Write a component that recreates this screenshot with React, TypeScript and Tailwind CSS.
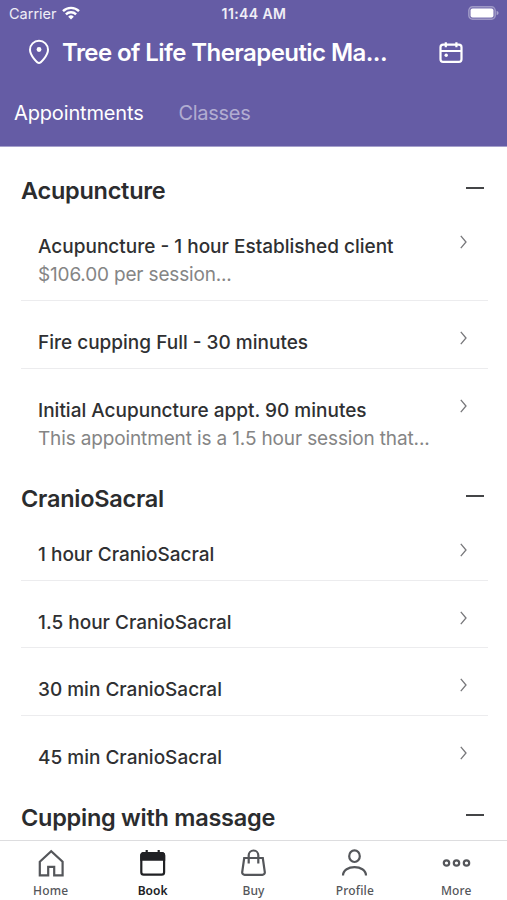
type Item = { title: string; sub?: string; subTracking?: string };
type SectionData = { name: string; items: Item[] };

const sections: SectionData[] = [
  {
    name: 'Acupuncture',
    items: [
      { title: 'Acupuncture - 1 hour Established client', sub: '$106.00 per session...', subTracking: 'tracking-[-0.17px]' },
      { title: 'Fire cupping Full - 30 minutes' },
      {
        title: 'Initial Acupuncture appt. 90 minutes',
        sub: 'This appointment is a 1.5 hour session that...',
        subTracking: 'tracking-[-0.14px]',
      },
    ],
  },
  {
    name: 'CranioSacral',
    items: [
      { title: '1 hour CranioSacral' },
      { title: '1.5 hour CranioSacral' },
      { title: '30 min CranioSacral' },
      { title: '45 min CranioSacral' },
    ],
  },
  { name: 'Cupping with massage', items: [] },
];

function Row({ item, last }: { item: Item; last: boolean }) {
  const height = item.sub ? (last ? 'h-[86px]' : 'h-24') : last ? 'h-[58.2px]' : 'h-[67.6px]';
  return (
    <li className={`flex items-start justify-between border-[#ececee] pr-[21px] pl-[17px] pt-7 ${height} ${last ? '' : 'border-b'}`}>
      <div className="whitespace-nowrap">
        <div className="text-[19px] leading-[27px] font-medium text-[#2f3032]">{item.title}</div>
        {item.sub && <div className={`text-[19px] leading-[30px] text-[#858585] ${item.subTracking}`}>{item.sub}</div>}
      </div>
      <svg className="mt-0.5 mr-[0.5px] h-[14px] w-[7px] shrink-0" viewBox="0 0 7 14" fill="none" stroke="#77777a" strokeWidth="1.3">
        <path d="M.8 .8 6 7 .8 13.2" />
      </svg>
    </li>
  );
}

function Section({ data }: { data: SectionData }) {
  return (
    <section>
      <header className="flex h-[58.3px] items-start justify-between pt-[28.8px]">
        <h2 className="text-[23.5px] leading-[30px] font-semibold tracking-[-0.26px] whitespace-nowrap text-[#2b2c2e]">{data.name}</h2>
        <div className="mt-[11.2px] mr-1 h-[2px] w-[18px] bg-[#444547]" />
      </header>
      <ul>
        {data.items.map((item, i) => (
          <Row key={item.title} item={item} last={i === data.items.length - 1} />
        ))}
      </ul>
    </section>
  );
}

const tabs = [
  {
    label: 'Home',
    icon: <path d="M3.8 12.8 15.2 2.2 26.6 12.8V26.4H18.2V17.8H12.2V26.4H3.8Z" />,
  },
  {
    label: 'Book',
    icon: (
      <>
        <rect x="3.3" y="4" width="22.8" height="21.6" rx="2.4" />
        <path d="M3.3 6.4A2.4 2.4 0 0 1 5.700 4h18a2.4 2.4 0 0 1 2.400 2.400v4.200H3.300ZM8.700 1v4M20.700 1v4" fill="currentColor" />
      </>
    ),
  },
  {
    label: 'Buy',
    icon: (
      <>
        <path d="M5.2 9h18.6l2 14.200a2.400 2.400 0 0 1-2.400 2.600H5.600a2.400 2.400 0 0 1-2.400-2.600Z" />
        <path d="M9.7 14.4V6.3a4.8 4.8 0 0 1 9.6 0v8.1" />
      </>
    ),
  },
  {
    label: 'Profile',
    icon: (
      <>
        <ellipse cx="14.5" cy="7.200" rx="5.300" ry="5.800" />
        <path d="M3 26.6c0-11.3 23-11.3 23 0" />
      </>
    ),
  },
  {
    label: 'More',
    icon: (
      <>
        <circle cx="4.5" cy="14" r="2.700" />
        <circle cx="14.5" cy="14" r="2.700" />
        <circle cx="24.500" cy="14" r="2.700" />
      </>
    ),
  },
];

export default function App() {
  return (
    <div className="flex h-[900px] w-[507px] flex-col overflow-hidden bg-white font-[Inter,'Liberation_Sans',sans-serif]">
      <header className="h-[147px] shrink-0 border-b border-[#a5a0cb] bg-[#655ca5] text-white">
        <div className="grid h-7 grid-cols-3 items-center pr-2 pl-[9px] text-[14px] text-white/90">
          <div className="flex items-center gap-[5px]">
            <span className="text-[14.5px] tracking-[0px]">Carrier</span>
            <svg className="-mt-[2px] h-[14px] w-[18px]" viewBox="0 0 18 14" fill="none" stroke="white" strokeWidth="2.4">
              <path d="M1 5.2a11.3 11.3 0 0 1 16 0M3.9 8.3a7.2 7.2 0 0 1 10.2 0" />
              <path d="M6.2 10.7a4 4 0 0 1 5.6 0L9 13.6Z" fill="white" stroke="none" />
            </svg>
          </div>
          <div className="-mt-px text-center font-semibold tracking-[0.4px]">11:44 AM</div>
          <svg className="-mt-[2px] h-[14px] w-[31px] justify-self-end" viewBox="0 0 31 14">
            <rect x=".7" y=".7" width="26.6" height="12.6" rx="3.8" fill="white" fillOpacity=".15" stroke="white" strokeOpacity=".35" strokeWidth="1.2" />
            <rect x="2.6" y="2.6" width="22.8" height="8.8" rx="2" fill="white" />
            <path d="M28.6 4.8q2 .8 2 2.2t-2 2.2Z" fill="white" fillOpacity=".45" />
          </svg>
        </div>
        <div className="flex h-[49px] items-center pr-11 pl-7">
          <svg className="-mt-[2px] h-[26px] w-[22px] shrink-0" viewBox="0 0 22 26" fill="none" stroke="white" strokeWidth="2">
            <path d="M11 24C9.400 24 2 16.500 2 10.700a9 9 0 0 1 18 0C20 16.500 12.600 24 11 24Z" />
            <circle cx="11" cy="10.500" r="2.400" fill="white" stroke="none" />
          </svg>
          <h1 className="ml-3 text-[24px] leading-8 font-semibold tracking-[-0.57px] whitespace-nowrap">Tree of Life Therapeutic Ma...</h1>
          <svg className="ml-auto h-[22px] w-6" viewBox="0 0 24 22" fill="none" stroke="white" strokeWidth="2.2">
            <rect x="1.500" y="2.700" width="21" height="17.200" rx="2.600" />
            <path d="M1.500 9h21M6.800 .2v5M17.400 .2v5" />
            <circle cx="7.200" cy="13.200" r="1.700" fill="white" stroke="none" />
          </svg>
        </div>
        <nav className="flex pt-[22px] pl-[14px] text-[20px] leading-7">
          <span className="w-[164.5px] tracking-[-0.15px]">Appointments</span>
          <span className="tracking-[-0.3px] text-white/50">Classes</span>
        </nav>
      </header>
      <main className="min-h-0 flex-1 overflow-hidden pr-[19px] pl-[21px]">
        {sections.map((s) => (
          <Section key={s.name} data={s} />
        ))}
      </main>
      <nav className="grid h-[60px] shrink-0 grid-cols-5 border-t border-[#dddddf] bg-white font-['Noto_Sans',sans-serif]">
        {tabs.map((t) => (
          <div key={t.label} className={`flex flex-col items-center pt-2 ${t.label === 'Book' ? 'text-[#202124]' : 'text-[#54565a]'}`}>
            <svg className="h-[29px] w-[29px]" viewBox="0 0 29 29" fill="none" stroke="currentColor" strokeWidth="2.2">
              {t.icon}
            </svg>
            <span className={`mt-[5px] text-[12px] leading-4 ${t.label === 'Book' ? 'pl-px font-semibold' : 'font-medium tracking-[0.15px]'}`}>{t.label}</span>
          </div>
        ))}
      </nav>
    </div>
  );
}
